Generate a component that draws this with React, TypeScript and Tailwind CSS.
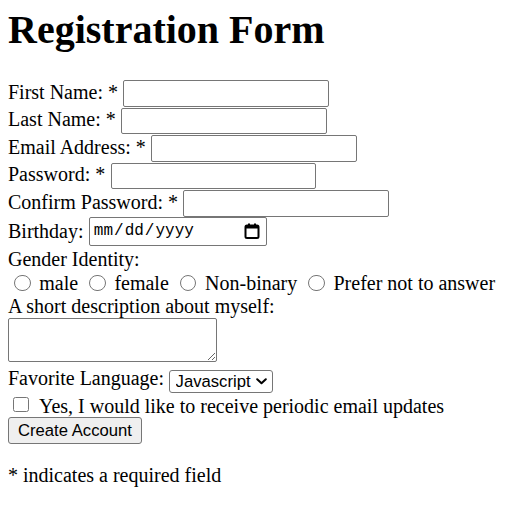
import React from 'react'

const serif = "font-['Liberation_Serif','Times_New_Roman',serif]"
const sans = "font-['Liberation_Sans',Arial,sans-serif]"

function TextRow({ label, type = 'text' }: { label: string; type?: string }) {
  return (
    <div className="flex items-center h-[27.5px]">
      <span className="mb-[2px] whitespace-nowrap">{label}</span>
      <input
        type={type}
        className={`ml-[5.3px] w-[205.5px] h-[26.5px] border border-[#767676] rounded-[2px] bg-white px-[2px] text-[16.67px] ${sans}`}
      />
    </div>
  )
}

function Radio({ label }: { label: string }) {
  return (
    <>
      <input
        type="radio"
        name="gender"
        className="appearance-none inline-block align-[-1px] ml-[6px] mr-[3.75px] w-[16.5px] h-[16.5px] rounded-full border border-[#767676] bg-white"
      />{' '}
      <label>{label}</label>{' '}
    </>
  )
}

export default function App() {
  return (
    <div className={`${serif} text-[20px] leading-[23px] text-black bg-white min-h-[507px] pl-[8px]`}>
      <h1 className="mt-[6.5px] mb-[27px] text-[40px] leading-[46px] font-bold">Registration Form</h1>

      <form>
        <TextRow label="First Name: *" />
        <TextRow label="Last Name: *" />
        <TextRow label="Email Address: *" type="email" />
        <TextRow label="Password: *" type="password" />
        <TextRow label="Confirm Password: *" type="password" />

        {/* birthday - date field is a bit taller than the text inputs */}
        <div className="flex items-start h-[30.5px]">
          <span className="mt-[2.5px]">Birthday:</span>
          <div className="relative ml-[5.3px]">
            <input
              type="date"
              className="w-[178px] h-[29px] border border-[#767676] rounded-[2px] bg-white pl-[3px] pr-[6px] text-[16px] font-['Liberation_Mono',monospace] [&::-webkit-calendar-picker-indicator]:opacity-0"
            />
            <svg
              className="absolute right-[7px] top-[6px] pointer-events-none"
              width="16"
              height="16"
              viewBox="0 0 16 16"
              fill="none"
            >
              <rect x="1.5" y="2.5" width="13" height="12.5" rx="1.5" stroke="#000" strokeWidth="2" />
              <rect x="1.5" y="2.5" width="13" height="3" fill="#000" />
              <rect x="4" y="0.5" width="2" height="3" fill="#000" />
              <rect x="10" y="0.5" width="2" height="3" fill="#000" />
            </svg>
          </div>
        </div>

        <div>Gender Identity:</div>
        <div className="pt-[1.75px] whitespace-nowrap">
          <Radio label="male" />
          <Radio label="female" />
          <Radio label="Non-binary" />
          <Radio label="Prefer not to answer" />
        </div>

        <div>A short description about myself:</div>
        <textarea className="block resize w-[208.5px] h-[44px] mb-[5px] border border-[#767676] rounded-[2px] bg-white" />

        <div className="flex items-start h-[25px]">
          <span>Favorite Language:</span>
          <div className="relative ml-[5px] mt-[2px]">
            <select
              className={`appearance-none w-[104px] h-[23px] border border-[#767676] rounded-[3px] bg-white pl-[5.5px] text-[16.67px] leading-[19px] ${sans}`}
              defaultValue="js"
            >
              <option value="js">Javascript</option>
              <option value="py">Python</option>
              <option value="java">Java</option>
            </select>
            <svg
              className="absolute right-[6.5px] top-[9px] pointer-events-none"
              width="11"
              height="7"
              viewBox="0 0 11 7"
              fill="none"
            >
              <path d="M1.2 1.2 L5.5 5.3 L9.8 1.2" stroke="#000" strokeWidth="2" strokeLinecap="round" strokeLinejoin="round" />
            </svg>
          </div>
        </div>

        <div className="flex items-start h-[25px]">
          <input
            type="checkbox"
            className="appearance-none ml-[5.3px] mt-[4.45px] w-[15.7px] h-[15.7px] rounded-[2.5px] border border-[#767676] bg-white"
          />
          <label className="ml-[10px] mt-[2.8px]">Yes, I would like to receive periodic email updates</label>
        </div>

        <button
          type="submit"
          className={`block h-[27px] px-[9px] border border-[#767676] rounded-[3px] bg-[#efefef] text-[16.67px] leading-[19px] text-black ${sans}`}
        >
          Create Account
        </button>
      </form>

      <p className="mt-[20px]">* indicates a required field</p>
    </div>
  )
}
